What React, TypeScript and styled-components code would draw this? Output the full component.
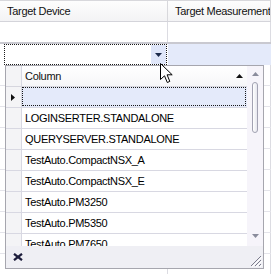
import React from "react";
import styled, { createGlobalStyle } from "styled-components";

const GlobalStyle = createGlobalStyle`
  html, body {
    margin: 0;
    padding: 0;
    background: #fff;
  }
  body {
    font-family: "Liberation Sans", Arial, sans-serif;
    font-size: 11px;
    letter-spacing: -0.3px;
    color: #000;
  }
`;

const items = [
  "",
  "LOGINSERTER.STANDALONE",
  "QUERYSERVER.STANDALONE",
  "TestAuto.CompactNSX_A",
  "TestAuto.CompactNSX_E",
  "TestAuto.PM3250",
  "TestAuto.PM5350",
  "TestAuto.PM7650",
];

const App: React.FC = () => {
  return (
    <Page>
      <GlobalStyle />
      <HeaderRow>
        <HeaderCell>Target Device</HeaderCell>
        <HeaderCell>Target Measurement</HeaderCell>
      </HeaderRow>
      <DataRow>
        <Cell />
        <Cell />
      </DataRow>
      <EditRow>
        <EditorCell>
          <Editor>
            <DropButton>
              <svg width="7" height="4" viewBox="0 0 7 4">
                <path d="M0 0 H7 L3.5 4 Z" fill="#1c2a4a" />
              </svg>
            </DropButton>
          </Editor>
        </EditorCell>
        <SelectedCell />
      </EditRow>
      {Array.from({ length: 10 }).map((_, i) => (
        <BgRow key={i}>
          <Cell />
          <Cell />
        </BgRow>
      ))}

      <Popup>
        <PopupBody>
          <Table>
            <TableHeader>
              <RowHead />
              <ColumnHead>
                <span>Column</span>
                <svg width="7" height="4" viewBox="0 0 7 4">
                  <path d="M0 4 H7 L3.5 0 Z" fill="#111" />
                </svg>
              </ColumnHead>
            </TableHeader>
            {items.map((item, i) => (
              <TableRow key={i}>
                <RowHead>
                  {i === 0 && (
                    <svg width="4" height="7" viewBox="0 0 4 7">
                      <path d="M0 0 L4 3.5 L0 7 Z" fill="#111" />
                    </svg>
                  )}
                </RowHead>
                <ItemCell selected={i === 0}>
                  {i === 0 ? <Focus /> : item}
                </ItemCell>
              </TableRow>
            ))}
          </Table>
          <ScrollBar>
            <svg width="7" height="4" viewBox="0 0 7 4">
              <path d="M0 4 H7 L3.5 0 Z" fill="#8a8c9c" />
            </svg>
            <Thumb />
            <Spacer />
            <svg width="7" height="4" viewBox="0 0 7 4">
              <path d="M0 0 H7 L3.5 4 Z" fill="#8a8c9c" />
            </svg>
          </ScrollBar>
        </PopupBody>
        <Footer>
          <svg width="10" height="8" viewBox="0 0 10 8">
            <path
              d="M1 0.8 L9 7.2 M9 0.8 L1 7.2"
              stroke="#1e1e3c"
              strokeWidth="2.2"
            />
          </svg>
          <Grip width="13" height="13" viewBox="0 0 13 13">
            <path
              d="M12 2 L2 12 M12 6 L6 12 M12 10 L10 12"
              stroke="#7c7c8c"
              strokeWidth="1"
            />
            <path
              d="M13 3 L3 13 M13 7 L7 13 M13 11 L11 13"
              stroke="#ffffff"
              strokeWidth="1"
            />
          </Grip>
        </Footer>
      </Popup>

      <Cursor width="13" height="21" viewBox="0 0 13 21">
        <path
          d="M0.5 0.5 V16.5 L4.5 12.8 L7.3 19.5 L9.8 18.4 L7.1 11.8 H12.2 Z"
          fill="#fff"
          stroke="#000"
          strokeWidth="1"
          strokeLinejoin="miter"
        />
      </Cursor>
    </Page>
  );
};

export default App;

const Page = styled.div`
  position: relative;
  width: 271px;
  height: 274px;
  overflow: hidden;
  background: #fff;
`;

const HeaderRow = styled.div`
  display: grid;
  grid-template-columns: 168px 1fr;
  height: 22px;
  box-sizing: border-box;
  border-top: 1px solid #d8d8dc;
  border-bottom: 1px solid #d4d4da;
  background: linear-gradient(#fdfdfd, #f3f3f5);
`;

const HeaderCell = styled.div`
  display: flex;
  align-items: center;
  padding-left: 7px;
  border-right: 1px solid #d8d8dc;
  color: #111;
  white-space: nowrap;
  overflow: hidden;
`;

const DataRow = styled.div`
  display: grid;
  grid-template-columns: 168px 1fr;
  height: 22px;
  box-sizing: border-box;
  border-bottom: 2px solid #c9c9d0;
`;

const Cell = styled.div`
  border-right: 1px solid #dcdce2;
`;

const EditRow = styled.div`
  display: grid;
  grid-template-columns: 168px 1fr;
  height: 21px;
  box-sizing: border-box;
`;

const EditorCell = styled.div`
  padding-left: 4px;
  display: flex;
`;

const Editor = styled.div`
  width: 163px;
  box-sizing: border-box;
  border: 1px dotted #1a1a1a;
  background: #fff;
  display: flex;
  justify-content: flex-end;
`;

const DropButton = styled.div`
  width: 15px;
  background: #dfe6f9;
  display: flex;
  align-items: center;
  justify-content: center;
  padding-top: 1px;
`;

const SelectedCell = styled.div`
  background: #e4eafa;
`;

const BgRow = styled.div`
  display: grid;
  grid-template-columns: 168px 1fr;
  height: 21px;
  box-sizing: border-box;
  border-bottom: 1px solid #e4e4ea;
`;

const Popup = styled.div`
  position: absolute;
  left: 5px;
  top: 65px;
  width: 259px;
  height: 204px;
  box-sizing: border-box;
  border: 1px solid #a6a6ae;
  background: #fff;
  display: flex;
  flex-direction: column;
`;

const PopupBody = styled.div`
  display: flex;
  height: 180px;
`;

const Table = styled.div`
  flex: 1;
  overflow: hidden;
`;

const TableHeader = styled.div`
  display: flex;
  height: 21px;
  box-sizing: border-box;
  border-bottom: 1px solid #d6d6de;
  background: linear-gradient(#ffffff, #f6f6f8);
`;

const TableRow = styled.div`
  display: flex;
  height: 21px;
  box-sizing: border-box;
  border-bottom: 1px solid #d8d8e2;
`;

const RowHead = styled.div`
  width: 16px;
  flex: none;
  box-sizing: border-box;
  border-right: 1px solid #d8d8e2;
  background: #f4f4f6;
  display: flex;
  align-items: center;
  justify-content: center;
  padding-right: 2px;
`;

const ColumnHead = styled.div`
  flex: 1;
  display: flex;
  align-items: center;
  justify-content: space-between;
  padding: 0 4px 0 3px;
  color: #111;
`;

const ItemCell = styled.div<{ selected?: boolean }>`
  flex: 1;
  display: flex;
  align-items: center;
  padding-left: 3px;
  white-space: nowrap;
  overflow: hidden;
  background: ${(p) => (p.selected ? "#e4eafa" : "#fff")};
  ${(p) => (p.selected ? "padding: 0 1px 1px 0;" : "")}
`;

const Focus = styled.div`
  flex: 1;
  align-self: stretch;
  border: 1px dotted #1a1a1a;
`;

const ScrollBar = styled.div`
  width: 16px;
  flex: none;
  background: #f6f4fa;
  display: flex;
  flex-direction: column;
  align-items: center;
  padding: 6px 0 8px;
  box-sizing: border-box;
`;

const Thumb = styled.div`
  width: 6px;
  height: 51px;
  margin-top: 6px;
  box-sizing: border-box;
  border: 1px solid #a2a2b2;
  border-radius: 3px;
  background: linear-gradient(90deg, #ffffff, #e6e6ee);
`;

const Spacer = styled.div`
  flex: 1;
`;

const Footer = styled.div`
  flex: 1;
  background: #efeff4;
  display: flex;
  align-items: center;
  justify-content: space-between;
  padding: 0 0 0 7px;
`;

const Grip = styled.svg`
  align-self: flex-end;
  margin: 0 1px 1px 0;
`;

const Cursor = styled.svg`
  position: absolute;
  left: 160px;
  top: 63px;
`;
